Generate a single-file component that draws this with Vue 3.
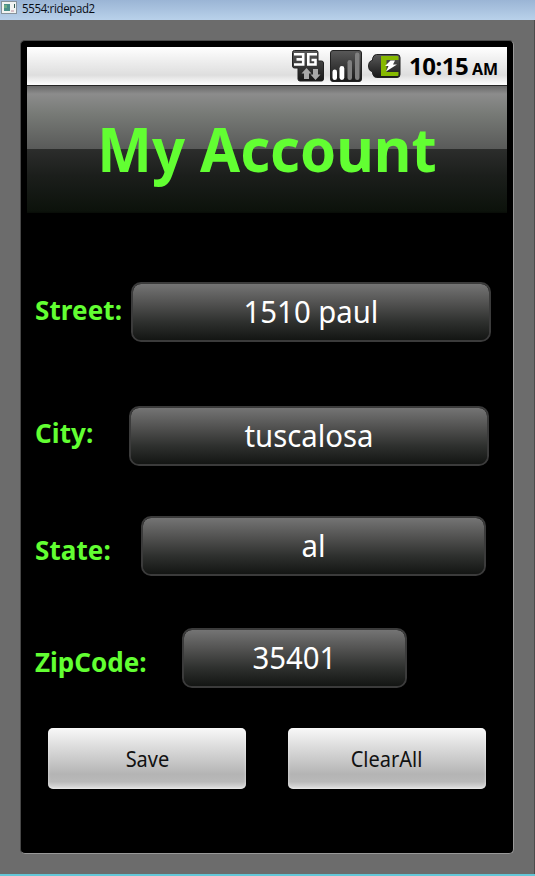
<script setup>
import { ref } from 'vue'

const emptyForm = () => ({ street: '', city: '', state: '', zip: '' })
const form = ref({ street: '1510 paul', city: 'tuscalosa', state: 'al', zip: '35401' })
const fields = [
  { key: 'street', label: 'Street:' },
  { key: 'city', label: 'City:' },
  { key: 'state', label: 'State:' },
  { key: 'zip', label: 'ZipCode:' }
]
function clearAll() {
  form.value = emptyForm()
}
</script>

<template>
  <div class="window">
    <header class="titlebar">
      <svg class="app-icon" width="16" height="14" viewBox="0 0 16 14">
        <rect x=".5" y=".5" width="15" height="12" fill="#f2f4f2" stroke="#87939b" />
        <rect x="3" y="3" width="6" height="7" fill="#4a8f8a" />
        <rect x="3" y="4" width="3" height="3" fill="#6fae86" />
        <path d="M13.500 3v4" stroke="#335b55" stroke-width="1" />
        <rect x="10" y="9" width="3" height="2" fill="#d8bfc8" />
      </svg>
      <span class="caption">5554:ridepad2</span>
    </header>
    <main class="desk">
      <section class="device">
        <div class="status">
          <svg width="33" height="32" viewBox="0 0 33 32">
            <defs>
              <linearGradient id="dark" x1="0" y1="0" x2="0" y2="1">
                <stop offset="0" stop-color="#595959" />
                <stop offset="1" stop-color="#181818" />
              </linearGradient>
            </defs>
            <path d="M2.500.5H24q2 0 2 2V11h3.500q2 0 2 2v16q0 2-2 2H8q-2 0-2-2V18H2.500q-2 0-2-2V2.500q0-2 2-2z" fill="url(#dark)" stroke="#222" />
            <g fill="none" stroke="#fff" stroke-width="2.600">
              <path d="M2 4.300h9.200v10.200H2M4.500 9.400h6.700" />
              <path d="M25 4.300h-8.700v10.200h7.200v-4.500h-4" />
            </g>
            <path d="M14.500 18l5 5.500h-2.500V29h-5v-5.500H9.500z" fill="#aaa" />
            <path d="M23.500 30l-5-5.500h2.500V19h5v5.500h2.500z" fill="#aaa" />
          </svg>
          <svg class="signal" width="32" height="32" viewBox="0 0 32 32">
            <rect x=".5" y=".5" width="31" height="31" rx="2.500" fill="url(#dark)" stroke="#222" />
            <rect x="2.500" y="19.500" width="4.500" height="10.500" rx="2.200" fill="#fff" />
            <rect x="9.500" y="16" width="4.800" height="14" rx="2.400" fill="#fff" />
            <rect x="17.500" y="10" width="4.500" height="20" rx="2.200" fill="#808080" />
            <rect x="25" y="2.500" width="4.500" height="27.500" rx="2.200" fill="#808080" />
          </svg>
          <svg class="battery" width="33" height="24" viewBox="0 0 33 24">
            <path d="M8.500 .5H29q3 0 3 3v17q0 3-3 3H8.500q-3 0-4-4v-2H3.500q-3-1-3-5.500t3-5.500h1v-2q1-4 4-4z" fill="url(#dark)" stroke="#222" />
            <path d="M13 2H29.500q1 0 1 1v3H18.500v12H30.500v3q0 1-1 1H13z" fill="#86b900" />
            <path d="M22.500 6.500h4.500l-2 4h4l-11 7 2.500-5.500h-3.500z" fill="#fff" />
          </svg>
          <span class="clock">10:15</span>
          <span class="meridiem">AM</span>
        </div>
        <div class="banner"><h1>My Account</h1></div>
        <form @submit.prevent>
          <div v-for="f in fields" :key="f.key" class="row" :class="f.key">
            <label :for="f.key">{{ f.label }}</label>
            <div class="field">
              <input :id="f.key" v-model="form[f.key]" type="text" spellcheck="false" />
            </div>
          </div>
          <div class="actions">
            <button type="submit"><span>Save</span></button>
            <button type="button" @click="clearAll"><span>ClearAll</span></button>
          </div>
        </form>
      </section>
    </main>
  </div>
</template>

<style>
body { background: #6c6c6c; overflow: hidden; }
</style>

<style scoped>
* { box-sizing: border-box; }
.window {
  width: 535px;
  height: 876px;
  display: flex;
  flex-direction: column;
  background: #6c6c6c;
  border-bottom: 2px solid #63c7d8;
  font-family: "Noto Sans", "Open Sans", sans-serif;
}
.titlebar {
  height: 20px;
  flex: none;
  display: flex;
  align-items: flex-start;
  padding: 1px 0 0 1px;
  background: linear-gradient(#9bb5d5, #b9d1ea);
}
.caption {
  margin-left: 5px;
  font: 12px/16px "Open Sans", sans-serif;
  letter-spacing: -.35px;
  color: #080c14;
  transform: scaleX(.955);
  transform-origin: left;
}
.desk {
  flex: 1;
  padding: 20px 0 0 20px;
  border-right: 1px solid #4c4c4c;
}
.device {
  width: 494px;
  height: 814px;
  padding: 6px 6px 0;
  background: #000;
  border: 1px solid;
  border-color: #4c4c4c #999 #999 #484848;
  border-radius: 5px;
}
.status {
  height: 39px;
  display: flex;
  align-items: flex-start;
  padding: 3px 0 0 265px;
  background: linear-gradient(#fff, #f2f2f2 28%, #dedede 74%, #fff);
  border-bottom: 1px solid #262626;
  color: #000;
  font-weight: 700;
  white-space: nowrap;
}
.status svg { flex: none; }
.signal { margin-left: 5px; }
.battery { margin: 4px 0 0 6px; }
.clock { margin-left: 8px; font-size: 24px; line-height: 32px; letter-spacing: -.5px; }
.meridiem {
  margin-left: 4px;
  font-size: 16.500px;
  line-height: 37px;
  transform: scaleX(.97);
  transform-origin: left;
}
.banner {
  height: 127px;
  background: linear-gradient(#686868 0, #8c8c8c 8px, #777a76 28px, #595a59 63px, #2c2d2c 63px, #1b1e1b 90px, #0c120b 125px, #080c07 127px);
}
h1 {
  margin: 0;
  font-size: 61.500px;
  line-height: 125px;
  text-align: center;
  color: #62ff32;
  white-space: nowrap;
  transform: scaleX(.942);
}
form { padding-left: 8px; }
.row { display: flex; align-items: center; height: 60px; }
.street { margin-top: 69px; }
.city { margin-top: 64px; }
.state { margin-top: 50px; }
.zip { margin-top: 52px; }
label {
  flex: none;
  width: 96px;
  padding-bottom: 4px;
  font-size: 26px;
  font-weight: 700;
  line-height: 36px;
  letter-spacing: .1px;
  color: #62ff32;
  white-space: nowrap;
}
.city label { width: 94px; padding-bottom: 6px; }
.state label { width: 106px; padding: 8px 0 0; }
.zip label { width: 147px; padding: 8px 0 0; letter-spacing: 0; }
.field {
  width: 360px;
  height: 60px;
  border: 2px solid #3b3b3b;
  border-radius: 10px;
  background: linear-gradient(#747474, #50504f 36%, #2d2f2d 69%, #131513) padding-box;
}
input {
  display: block;
  width: 100%;
  height: 56px;
  margin: 0;
  padding: 0 0 3px;
  border: 0;
  outline: 0;
  background: none;
  color: #fff;
  font: 31px "Noto Sans", sans-serif;
  text-align: center;
  transform: scaleX(.945);
}
.state .field { width: 345px; }
.zip .field { width: 225px; }
.actions { display: flex; gap: 42px; margin: 40px 0 0 13px; }
button {
  width: 198px;
  height: 61px;
  padding: 0;
  border: 0;
  border-radius: 5px;
  background: linear-gradient(#f8f8f8, #ddd 30%, #b4b4b4 76%, #b9b9b9 88%, #e0e0e0);
  box-shadow: inset 0 0 3px rgba(255, 255, 255, .65);
  color: #111;
  font: 21.500px "Noto Sans", sans-serif;
}
button span { display: inline-block; transform: scaleX(.93); }
</style>
